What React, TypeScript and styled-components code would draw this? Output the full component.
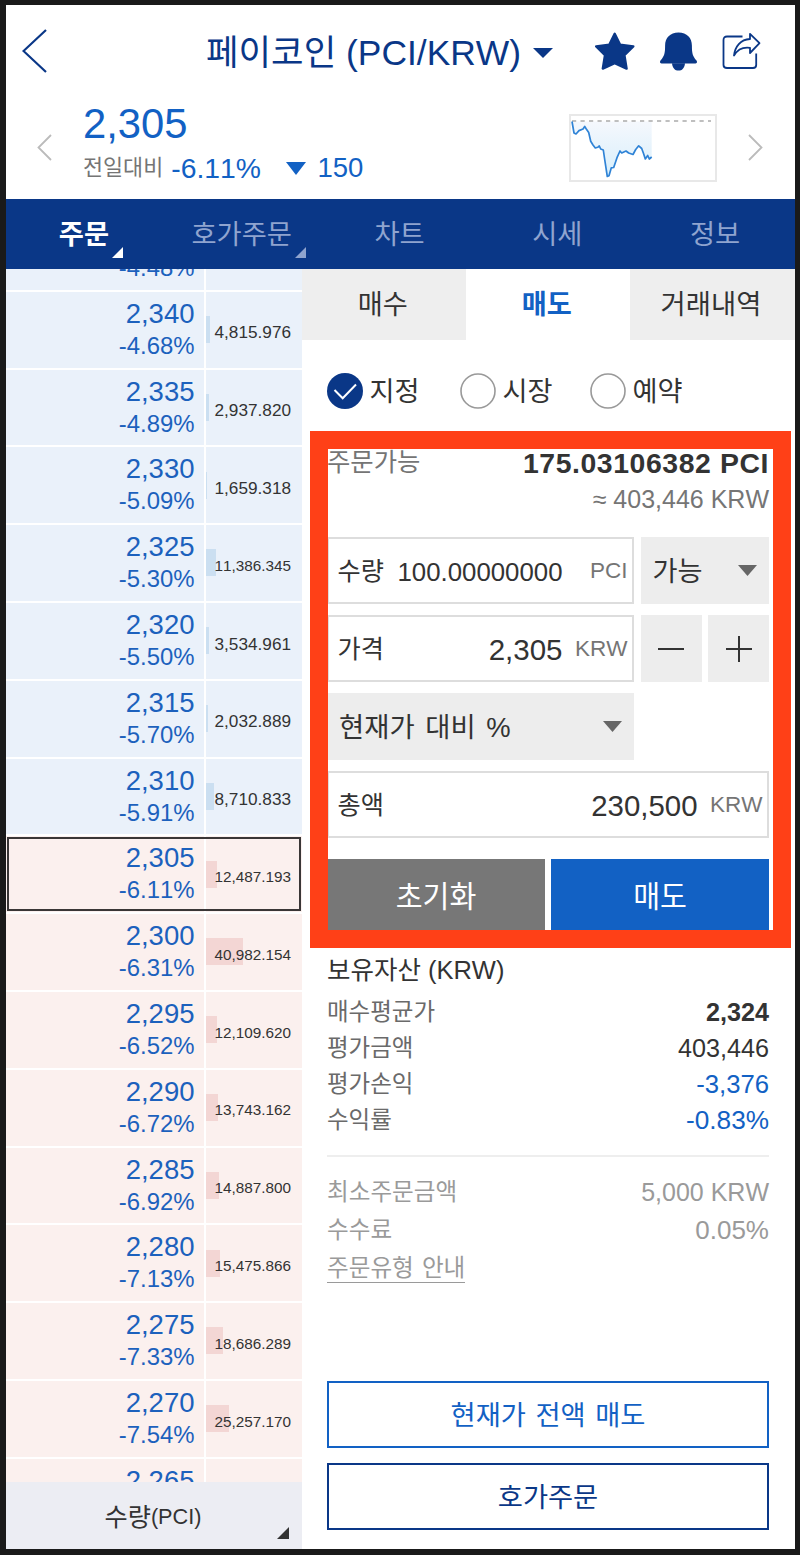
import React from "react";
import styled, { createGlobalStyle } from "styled-components";

const NAVY = "#0a3787";
const BLUE = "#1261c4";
const INK = "#333333";
const MUTED = "#757575";
const FAINT = "#9a9a9a";

const GlobalStyle = createGlobalStyle`
  * { box-sizing: border-box; }
  body {
    margin: 0;
    background: #1a1a1a;
    font-family: "Liberation Sans", "Noto Sans CJK KR", sans-serif;
    font-kerning: none;
    color: ${INK};
  }
  button {
    font: inherit;
    color: inherit;
    background: none;
    border: 0;
    padding: 0;
  }
`;

const Frame = styled.div`
  width: 800px;
  height: 1555px;
  padding: 5px 5.5px 6px 5.5px;
  background: #1a1a1a;
`;

const Screen = styled.main`
  height: 100%;
  display: flex;
  flex-direction: column;
  background: #fff;
  overflow: hidden;
`;

const Text = styled.span<{
  $size: number;
  $color?: string;
  $bold?: boolean;
  $track?: number;
  $line?: number;
  $space?: number;
}>`
  font-size: ${(p) => p.$size}px;
  line-height: ${(p) => p.$line ?? 36}px;
  letter-spacing: ${(p) => p.$track ?? 0}px;
  word-spacing: ${(p) => p.$space ?? 0}px;
  font-weight: ${(p) => (p.$bold ? 700 : 400)};
  color: ${(p) => p.$color ?? "inherit"};
  white-space: pre;
`;

/* Header */

const TopBar = styled.header`
  flex: none;
  display: flex;
  align-items: center;
  height: 92px;
  padding: 0 33.5px 0 16.5px;
  color: ${NAVY};
`;

const Title = styled.h1`
  display: flex;
  align-items: center;
  gap: 11.5px;
  margin: 4px 0 0 159px;
  font-weight: 400;
`;

const Actions = styled.div`
  display: flex;
  align-items: center;
  gap: 24px;
  margin-left: auto;
`;

const Icon = styled.svg`
  display: block;
  flex: none;
`;

const Quote = styled.section`
  flex: none;
  display: flex;
  align-items: center;
  height: 102px;
  padding: 0 31.5px 1px 31px;
`;

const QuoteText = styled.div`
  display: flex;
  flex-direction: column;
  margin: -3px auto 0 31.5px;
  color: ${BLUE};
`;

const ChangeLine = styled.div`
  display: flex;
  align-items: center;
  height: 44px;
`;

const ChangeRate = styled(Text)`
  margin: 0 25.5px 0 8px;
`;

const ChangeAmount = styled(Text)`
  margin-left: 11px;
`;

const SparkBox = styled.div`
  width: 148px;
  height: 68px;
  margin: 0 31.5px 0 0;
  border: 2px solid #e8e8e8;
`;

/* Navigation */

const Nav = styled.nav`
  flex: none;
  display: grid;
  grid-template-columns: repeat(5, 1fr);
  height: 69.5px;
  background: ${NAVY};
`;

const NavItem = styled.button<{ $active?: boolean }>`
  position: relative;
  padding: 2px 1px 0 0;
  color: ${(p) => (p.$active ? "#fff" : "#8fa4cf")};
`;

const Corner = styled.i<{ $right: number; $bottom: number; $size: number }>`
  position: absolute;
  right: ${(p) => p.$right}px;
  bottom: ${(p) => p.$bottom}px;
  border-left: ${(p) => p.$size}px solid transparent;
  border-bottom: ${(p) => p.$size}px solid currentColor;
`;

const Body = styled.div`
  flex: 1;
  min-height: 0;
  display: grid;
  grid-template-columns: 296px 1fr;
`;

/* Order book */

const BookColumn = styled.aside`
  display: flex;
  flex-direction: column;
  min-height: 0;
`;

const Book = styled.div`
  flex: 1;
  min-height: 0;
  overflow: hidden;
`;

const BookRows = styled.div`
  margin-top: -54.5px;
`;

const BookRow = styled.div<{ $side: "ask" | "bid"; $current?: boolean }>`
  display: grid;
  grid-template-columns: 198px 1fr;
  gap: 2px;
  height: 75.8px;
  margin-bottom: 2px;
  --cell: ${(p) => (p.$side === "ask" ? "#eaf1fa" : "#fbf0ee")};
  --bar: ${(p) => (p.$side === "ask" ? "#cbdff1" : "#f3d6d4")};
  outline: ${(p) => (p.$current ? "2px solid #3a3636" : "none")};
  outline-offset: -3px;
`;

const PriceCell = styled.div`
  display: flex;
  flex-direction: column;
  align-items: flex-end;
  padding: 6px 9px 0 0;
  background: var(--cell);
  color: #1c61bd;
`;

const VolumeCell = styled.div`
  display: grid;
  align-items: center;
  padding: 5.5px 10.5px 0 0.5px;
  background: var(--cell);
  & > * {
    grid-area: 1 / 1;
  }
`;

const VolumeBar = styled.i`
  height: 27px;
  margin-bottom: 6px;
  background: var(--bar);
`;

const VolumeText = styled(Text)`
  justify-self: end;
`;

const BookFooter = styled.button`
  position: relative;
  flex: none;
  display: flex;
  align-items: center;
  justify-content: center;
  height: 67px;
  padding: 3px 1px 0 0;
  background: #ecedf3;
`;

/* Order panel */

const Panel = styled.section`
  position: relative;
  display: flex;
  flex-direction: column;
`;

const Tabs = styled.div`
  display: grid;
  grid-template-columns: 164.5px 163.5px 1fr;
  height: 71.5px;
`;

const Tab = styled.button<{ $active?: boolean }>`
  padding: 2px 2px 0 0;
  background: ${(p) => (p.$active ? "#fff" : "#eee")};
  color: ${(p) => (p.$active ? BLUE : INK)};
`;

const Content = styled.div`
  flex: 1;
  display: flex;
  flex-direction: column;
  padding: 0 25.5px 19px 25.5px;
`;

const Radios = styled.div`
  display: flex;
  height: 36px;
  margin-top: 33px;
`;

const Radio = styled.label<{ $gap?: number }>`
  display: flex;
  align-items: center;
  gap: 6.5px;
  margin-right: ${(p) => p.$gap ?? 0}px;
`;

const RadioText = styled(Text)`
  margin-top: 2px;
`;

const Available = styled.div`
  display: flex;
  justify-content: space-between;
  margin-top: 36px;
`;

const AvailableValues = styled.div`
  display: flex;
  flex-direction: column;
  align-items: flex-end;
`;

const Form = styled.div`
  display: grid;
  grid-template-columns: 307px 61px 61px;
  grid-auto-rows: 67px;
  column-gap: 6.5px;
  row-gap: 11px;
  margin-top: 20px;
`;

const Field = styled.div<{ $wide?: boolean }>`
  grid-column: ${(p) => (p.$wide ? "1 / -1" : "1")};
  display: flex;
  align-items: center;
  padding: 0 4.5px 0 8.5px;
  border: 2px solid #ddd;
`;

const FieldValue = styled(Text)`
  margin: 3px 12px 0 auto;
`;

const UnitText = styled(Text)`
  width: 53px;
  text-align: right;
`;

const Select = styled.button<{ $span?: number }>`
  grid-column: span ${(p) => p.$span ?? 1};
  display: flex;
  align-items: center;
  justify-content: space-between;
  padding: 0 12px;
  background: #ededed;
`;

const SelectText = styled(Text)`
  margin-top: 2px;
`;

const StepButton = styled.button`
  display: grid;
  place-items: center;
  background: #ededed;
`;

const Submit = styled.div`
  display: grid;
  grid-template-columns: 1fr 1fr;
  gap: 6px;
  height: 73px;
  margin-top: 21px;
`;

const SolidButton = styled.button<{ $fill: string }>`
  padding-top: 2px;
  background: ${(p) => p.$fill};
  color: #fff;
`;

const Highlight = styled.div`
  position: absolute;
  left: 8px;
  top: 162.5px;
  width: 481.5px;
  height: 517px;
  border: 18px solid #ff4017;
  pointer-events: none;
`;

const Assets = styled.section`
  display: flex;
  flex-direction: column;
  margin-top: 20px;
  padding-bottom: 17px;
  border-bottom: 2px solid #eee;
`;

const AssetsTitle = styled(Text)`
  margin-bottom: 6px;
`;

const Notes = styled.section`
  display: flex;
  flex-direction: column;
  gap: 2px;
  margin-top: 17px;
  color: ${FAINT};
`;

const Pair = styled.div`
  display: flex;
  justify-content: space-between;
  height: 36px;
`;

const GuideLink = styled(Text)`
  align-self: flex-start;
  border-bottom: 1.5px solid ${FAINT};
  margin-top: 4px;
`;

const BottomButtons = styled.div`
  display: grid;
  grid-auto-rows: 67px;
  gap: 15px;
  margin-top: auto;
`;

const OutlineButton = styled.button<{ $tone: string }>`
  padding-top: 2px;
  border: 2px solid ${(p) => p.$tone};
  color: ${(p) => p.$tone};
`;

/* Data */

type Level = { price: string; change: string; volume?: string };

const asks: Level[] = [
  { price: "2,345", change: "-4.48%" },
  { price: "2,340", change: "-4.68%", volume: "4,815.976" },
  { price: "2,335", change: "-4.89%", volume: "2,937.820" },
  { price: "2,330", change: "-5.09%", volume: "1,659.318" },
  { price: "2,325", change: "-5.30%", volume: "11,386.345" },
  { price: "2,320", change: "-5.50%", volume: "3,534.961" },
  { price: "2,315", change: "-5.70%", volume: "2,032.889" },
  { price: "2,310", change: "-5.91%", volume: "8,710.833" },
];

const bids: Level[] = [
  { price: "2,305", change: "-6.11%", volume: "12,487.193" },
  { price: "2,300", change: "-6.31%", volume: "40,982.154" },
  { price: "2,295", change: "-6.52%", volume: "12,109.620" },
  { price: "2,290", change: "-6.72%", volume: "13,743.162" },
  { price: "2,285", change: "-6.92%", volume: "14,887.800" },
  { price: "2,280", change: "-7.13%", volume: "15,475.866" },
  { price: "2,275", change: "-7.33%", volume: "18,686.289" },
  { price: "2,270", change: "-7.54%", volume: "25,257.170" },
  { price: "2,265", change: "-7.74%" },
];

const holdings = [
  { label: "매수평균가", value: "2,324", bold: true, color: INK },
  { label: "평가금액", value: "403,446", color: INK },
  { label: "평가손익", value: "-3,376", color: BLUE, size: 25.7 },
  { label: "수익률", value: "-0.83%", color: BLUE, size: 26.2 },
];

const navItems = [
  { label: "주문", active: true, corner: true },
  { label: "호가주문", corner: true },
  { label: "차트" },
  { label: "시세" },
  { label: "정보" },
];

/* Pieces */

const Chevron = ({ flip, w, h, color, stroke }: { flip?: boolean; w: number; h: number; color: string; stroke: number }) => (
  <Icon width={w} height={h} viewBox={`0 0 ${w} ${h}`} fill="none" stroke={color} strokeWidth={stroke}>
    <path d={flip ? `M1 1L${w - 1.5} ${h / 2}L1 ${h - 1}` : `M${w - 1} 1L1.5 ${h / 2}L${w - 1} ${h - 1}`} />
  </Icon>
);

const Caret = ({ w, h, color }: { w: number; h: number; color: string }) => (
  <Icon width={w} height={h} viewBox={`0 0 ${w} ${h}`}>
    <path d={`M0 0H${w}L${w / 2} ${h}Z`} fill={color} />
  </Icon>
);

const Star = () => (
  <Icon width="41" height="39" viewBox="0 0 41 39" fill={NAVY} stroke={NAVY} strokeWidth="2.4" strokeLinejoin="round">
    <path d="M19.7 1.8L25 12.6L38.3 14.4L29.4 23.2L31.6 36.6L19.7 31.2L7.8 36.6L10 23.2L1.2 14.4L14.4 12.6Z" />
  </Icon>
);

const Bell = () => (
  <Icon width="38" height="39" viewBox="0 0 38 39" fill={NAVY}>
    <path d="M18.500 .5C27 .5 31.900 6 31.900 13.500C31.900 21 32.500 24 36.500 28.600C37.500 30 36.900 31.400 35.500 31.400H1.500C.1 31.400 -.5 30 .5 28.600C4.500 24 5.100 21 5.100 13.500C5.100 6 10 .5 18.500 .5Z" />
    <path d="M12 31.200H25C24.500 36.200 22 38.600 18.500 38.600C15 38.600 12.500 36.200 12 31.200Z" />
  </Icon>
);

const Share = () => (
  <Icon width="39" height="38" viewBox="0 0 39 38" fill="none" stroke={NAVY} strokeWidth="1.8" strokeLinejoin="round">
    <path d="M20.500 4.500H5Q1.500 4.500 1.500 8V33Q1.500 36 5 36H31Q34.200 36 34.200 33V21.500" />
    <path d="M28 1.800L37.500 11.200L28 21V15.800C21 14.800 15.500 17.500 12 23.500C13 14.500 18.500 7.500 28 7Z" />
  </Icon>
);

const spark: [number, number][] = [
  [1, 5.5], [3, 17], [5, 18], [8, 14.6], [12, 13], [13.7, 10.5], [15.3, 13], [17.7, 16.5], [19.7, 25.2],
  [22, 29], [24.3, 32], [26.7, 31.3], [28.3, 30], [29.7, 33], [32.3, 34], [33.7, 43.5], [36.3, 60.5],
  [38, 59.8], [40.3, 51.8], [42.7, 51.5], [46, 41.7], [49, 35], [50.7, 37], [55, 35], [57.7, 37],
  [62, 38.5], [64.7, 33.5], [67.7, 29.8], [70.7, 32.5], [72.7, 38], [74.3, 43], [76.7, 39.5],
  [78.3, 43], [80.7, 41],
];

const Sparkline = () => {
  const line = spark.map(([x, y]) => `${x} ${y}`).join("L");
  return (
    <Icon width="144" height="64" viewBox="0 0 144 64" fill="none">
      <defs>
        <linearGradient id="fade" x1="0" y1="0" x2="0" y2="1">
          <stop offset="0" stopColor="#f5f8fd" />
          <stop offset=".5" stopColor="#e6f3fc" />
          <stop offset="1" stopColor="#d8f0fc" />
        </linearGradient>
      </defs>
      <path d={`M${line}V5.5H1Z`} fill="url(#fade)" />
      <path d="M1 5H140" stroke="#aaa" strokeWidth="1.3" strokeDasharray="4.2 4.3" />
      <path d={`M${line}`} stroke="#2f83d6" strokeWidth="1.7" strokeLinejoin="round" />
    </Icon>
  );
};

const RadioMark = ({ checked }: { checked?: boolean }) => (
  <Icon width="36" height="36" viewBox="0 0 36 36" fill="none">
    {checked ? (
      <>
        <circle cx="18" cy="18" r="18" fill={NAVY} />
        <path d="M7.5 17L15.7 25.3L29 11.5" stroke="#fff" strokeWidth="2" />
      </>
    ) : (
      <circle cx="18" cy="18" r="17" stroke="#999" strokeWidth="1.6" />
    )}
  </Icon>
);

const BookLevel = ({ level, side, current }: { level: Level; side: "ask" | "bid"; current?: boolean }) => {
  const amount = level.volume ? parseFloat(level.volume.replace(/,/g, "")) : 0;
  return (
    <BookRow $side={side} $current={current}>
      <PriceCell>
        <Text $size={27.5} $line={32}>{level.price}</Text>
        <Text $size={23.9} $line={31}>{level.change}</Text>
      </PriceCell>
      <VolumeCell>
        {level.volume && (
          <>
            <VolumeBar style={{ width: amount / 1120 }} />
            <VolumeText $size={level.volume.length > 9 ? 15.3 : 17.2} $line={24}>{level.volume}</VolumeText>
          </>
        )}
      </VolumeCell>
    </BookRow>
  );
};

export default function App() {
  return (
    <Frame>
      <GlobalStyle />
      <Screen>
        <TopBar>
          <Chevron w={25} h={44} color={NAVY} stroke={2.2} />
          <Title>
            <Text $size={35.4} $line={44}>페이코인 (PCI/KRW)</Text>
            <Caret w={20} h={10} color={NAVY} />
          </Title>
          <Actions>
            <Star />
            <Bell />
            <Share />
          </Actions>
        </TopBar>

        <Quote>
          <Chevron w={15} h={27} color="#bbb" stroke={1.8} />
          <QuoteText>
            <Text $size={41.8} $line={44}>2,305</Text>
            <ChangeLine>
              <Text $size={21.8} $color={MUTED} $line={38}>전일대비</Text>
              <ChangeRate $size={28.3}>-6.11%</ChangeRate>
              <Caret w={20} h={13} color={BLUE} />
              <ChangeAmount $size={27.5}>150</ChangeAmount>
            </ChangeLine>
          </QuoteText>
          <SparkBox>
            <Sparkline />
          </SparkBox>
          <Chevron flip w={15} h={27} color="#bbb" stroke={1.8} />
        </Quote>

        <Nav>
          {navItems.map((item) => (
            <NavItem key={item.label} $active={item.active}>
              <Text $size={27.3} $bold={item.active}>{item.label}</Text>
              {item.corner && <Corner $right={item.active ? 40.5 : 15} $bottom={10.5} $size={11} />}
            </NavItem>
          ))}
        </Nav>

        <Body>
          <BookColumn>
            <Book>
              <BookRows>
                {asks.map((l) => (
                  <BookLevel key={l.price} level={l} side="ask" />
                ))}
                {bids.map((l, i) => (
                  <BookLevel key={l.price} level={l} side="bid" current={i === 0} />
                ))}
              </BookRows>
            </Book>
            <BookFooter>
              <Text $size={25.2}>수량</Text>
              <Text $size={21.7}>(PCI)</Text>
              <Corner $right={13} $bottom={10} $size={12.5} />
            </BookFooter>
          </BookColumn>

          <Panel>
            <Tabs>
              <Tab><Text $size={27.2}>매수</Text></Tab>
              <Tab $active><Text $size={27.2} $bold>매도</Text></Tab>
              <Tab><Text $size={27.4}>거래내역</Text></Tab>
            </Tabs>
            <Content>
              <Radios>
                <Radio $gap={40.5}><RadioMark checked /><RadioText $size={27.2}>지정</RadioText></Radio>
                <Radio $gap={37.5}><RadioMark /><RadioText $size={27.2}>시장</RadioText></Radio>
                <Radio><RadioMark /><RadioText $size={27.2}>예약</RadioText></Radio>
              </Radios>

              <Available>
                <Text $size={25.4} $color={MUTED} $line={34}>주문가능</Text>
                <AvailableValues>
                  <Text $size={28.4} $bold $track={0.58}>175.03106382 PCI</Text>
                  <Text $size={25} $color={MUTED}>≈ 403,446 KRW</Text>
                </AvailableValues>
              </Available>

              <Form>
                <Field>
                  <Text $size={25.2}>수량</Text>
                  <FieldValue $size={25.8} $line={38}>100.00000000</FieldValue>
                  <UnitText $size={22.5} $color={MUTED}>PCI</UnitText>
                </Field>
                <Select $span={2}>
                  <SelectText $size={27.2}>가능</SelectText>
                  <Caret w={19} h={11} color="#666" />
                </Select>

                <Field>
                  <Text $size={25.2}>가격</Text>
                  <FieldValue $size={29.5}>2,305</FieldValue>
                  <UnitText $size={22.5} $color={MUTED}>KRW</UnitText>
                </Field>
                <StepButton>
                  <Icon width="26" height="26" viewBox="0 0 26 26" stroke={INK} strokeWidth="2"><path d="M0 13H26" /></Icon>
                </StepButton>
                <StepButton>
                  <Icon width="26" height="26" viewBox="0 0 26 26" stroke={INK} strokeWidth="2"><path d="M0 13H26M13 0V26" /></Icon>
                </StepButton>

                <Select>
                  <SelectText $size={27.4} $space={3}>현재가 대비 %</SelectText>
                  <Caret w={19} h={11} color="#666" />
                </Select>

                <Field $wide>
                  <Text $size={25.2}>총액</Text>
                  <FieldValue $size={29.4}>230,500</FieldValue>
                  <UnitText $size={22.5} $color={MUTED}>KRW</UnitText>
                </Field>
              </Form>

              <Submit>
                <SolidButton $fill="#777"><Text $size={29.2}>초기화</Text></SolidButton>
                <SolidButton $fill={BLUE}><Text $size={29.2}>매도</Text></SolidButton>
              </Submit>

              <Assets>
                <AssetsTitle $size={25.5}>보유자산 (KRW)</AssetsTitle>
                {holdings.map((h) => (
                  <Pair key={h.label}>
                    <Text $size={23.5} $color="#6a6a6a">{h.label}</Text>
                    <Text $size={h.size ?? 25.2} $color={h.color} $bold={h.bold}>{h.value}</Text>
                  </Pair>
                ))}
              </Assets>

              <Notes>
                <Pair>
                  <Text $size={23.6}>최소주문금액</Text>
                  <Text $size={25}>5,000 KRW</Text>
                </Pair>
                <Pair>
                  <Text $size={23.6}>수수료</Text>
                  <Text $size={26}>0.05%</Text>
                </Pair>
                <GuideLink $size={23.6} $line={28} $space={1.5}>주문유형 안내</GuideLink>
              </Notes>

              <BottomButtons>
                <OutlineButton $tone={BLUE}><Text $size={27.3} $space={2}>현재가 전액 매도</Text></OutlineButton>
                <OutlineButton $tone={NAVY}><Text $size={27.3}>호가주문</Text></OutlineButton>
              </BottomButtons>
            </Content>
            <Highlight />
          </Panel>
        </Body>
      </Screen>
    </Frame>
  );
}
